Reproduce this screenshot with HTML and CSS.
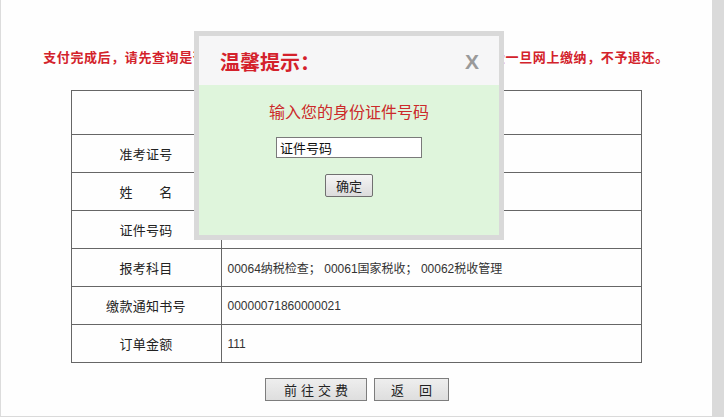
FILE: index.html
```html
<!DOCTYPE html>
<html lang="zh-CN">
<head>
<meta charset="utf-8">
<title>订单信息</title>
<link rel="stylesheet" href="styles.css">
</head>
<body>
<div class="frame">
  <div class="page">
    <p class="notice">支付完成后，请先查询是否缴费成功，切勿重复支付，以免重复扣费。考试费一旦网上缴纳，不予退还。</p>
    <table class="info">
      <tr class="head-row"><td colspan="2" class="caption"></td></tr>
      <tr><td class="label">准考证号</td><td class="value"></td></tr>
      <tr><td class="label">姓&emsp;&emsp;名</td><td class="value"></td></tr>
      <tr><td class="label">证件号码</td><td class="value"></td></tr>
      <tr><td class="label">报考科目</td><td class="value">00064纳税检查； 00061国家税收； 00062税收管理</td></tr>
      <tr><td class="label">缴款通知书号</td><td class="value">00000071860000021</td></tr>
      <tr><td class="label">订单金额</td><td class="value">111</td></tr>
    </table>
    <div class="actions">
      <button class="btn btn-pay">前往交费</button>
      <button class="btn btn-back">返回</button>
    </div>
  </div>
  <div class="modal">
    <div class="modal-head">
      <span class="modal-title">温馨提示：</span>
      <span class="modal-close">X</span>
    </div>
    <div class="modal-body">
      <div class="modal-msg">输入您的身份证件号码</div>
      <input class="id-input" type="text" value="证件号码">
      <button class="ok-btn">确定</button>
    </div>
  </div>
</div>
</body>
</html>
```
FILE: styles.css
```css
html, body {
  margin: 0;
  padding: 0;
}
body {
  background: #dadada;
  font-family: "Liberation Sans", "Noto Sans CJK SC", sans-serif;
  width: 724px;
  height: 417px;
  overflow: hidden;
}
.frame {
  position: relative;
  width: 724px;
  height: 417px;
}
.page {
  width: 712px;
  height: 416px;
  box-sizing: border-box;
  background: #fefefe;
  box-shadow: inset 1px 0 0 #dcdcdc;
  padding-top: 48px;
}
.notice {
  margin: 0;
  text-align: center;
  color: #d3222b;
  font-weight: bold;
  font-size: 13px;
  letter-spacing: 0.6px;
  line-height: 20px;
  white-space: nowrap;
}
.info {
  margin: 22px auto 0;
  width: 571px;
  border-collapse: collapse;
  border: 1px solid #666;
}
.info td {
  border: 1px solid #666;
  padding: 0;
  height: 37px;
}
.info .head-row td {
  height: 43px;
}
.label {
  width: 149px;
  text-align: center;
  font-size: 13px;
  letter-spacing: 0.3px;
  color: #222;
}
.value {
  padding-left: 6px !important;
  font-size: 12px;
  color: #333;
}
.actions {
  display: flex;
  justify-content: center;
  gap: 7px;
  margin-top: 15px;
  padding-left: 2px;
}
.btn {
  height: 23px;
  box-sizing: border-box;
  border: 1px solid #7d7d7d;
  background: linear-gradient(#eeeeee, #dedede);
  font-family: "Noto Sans CJK SC", sans-serif;
  font-size: 13px;
  color: #222;
  padding: 0;
  line-height: 19px;
}
.btn-pay {
  width: 102px;
  letter-spacing: 4px;
  text-indent: 4px;
}
.btn-back {
  width: 75px;
  letter-spacing: 15px;
  text-indent: 15px;
}
.modal {
  position: absolute;
  left: 194px;
  top: 31px;
  width: 300px;
  border: 5px solid #d9d9d9;
}
.modal-head {
  height: 49px;
  background: #f6f6f7;
  display: flex;
  align-items: center;
  justify-content: space-between;
  padding: 0 20px 0 21px;
}
.modal-title {
  font-family: "Liberation Serif", "Noto Sans CJK SC", serif;
  font-size: 20px;
  font-weight: bold;
  color: #d4212b;
  margin-top: 2px;
}
.modal-close {
  font-family: "Liberation Sans", sans-serif;
  font-size: 21px;
  font-weight: bold;
  color: #9a9a9a;
  margin-top: 3px;
}
.modal-body {
  height: 150px;
  background: #dff5dc;
  display: flex;
  flex-direction: column;
  align-items: center;
}
.modal-msg {
  margin-top: 15px;
  font-family: "Noto Sans CJK SC", sans-serif;
  font-size: 16px;
  line-height: 22px;
  color: #cc2a2a;
}
.id-input {
  margin-top: 15px;
  width: 146px;
  height: 21px;
  box-sizing: border-box;
  border: 1px solid #7a7a7a;
  background: #fff;
  padding: 0 3px;
  font-family: "Noto Sans CJK SC", sans-serif;
  font-size: 13px;
  color: #111;
}
.ok-btn {
  margin-top: 16px;
  width: 48px;
  height: 23px;
  box-sizing: border-box;
  border: 1px solid #707070;
  border-radius: 2px;
  background: linear-gradient(#f5f5f5, #dcdcdc);
  font-family: "Noto Sans CJK SC", sans-serif;
  font-size: 13px;
  color: #222;
  padding: 0;
}
```
